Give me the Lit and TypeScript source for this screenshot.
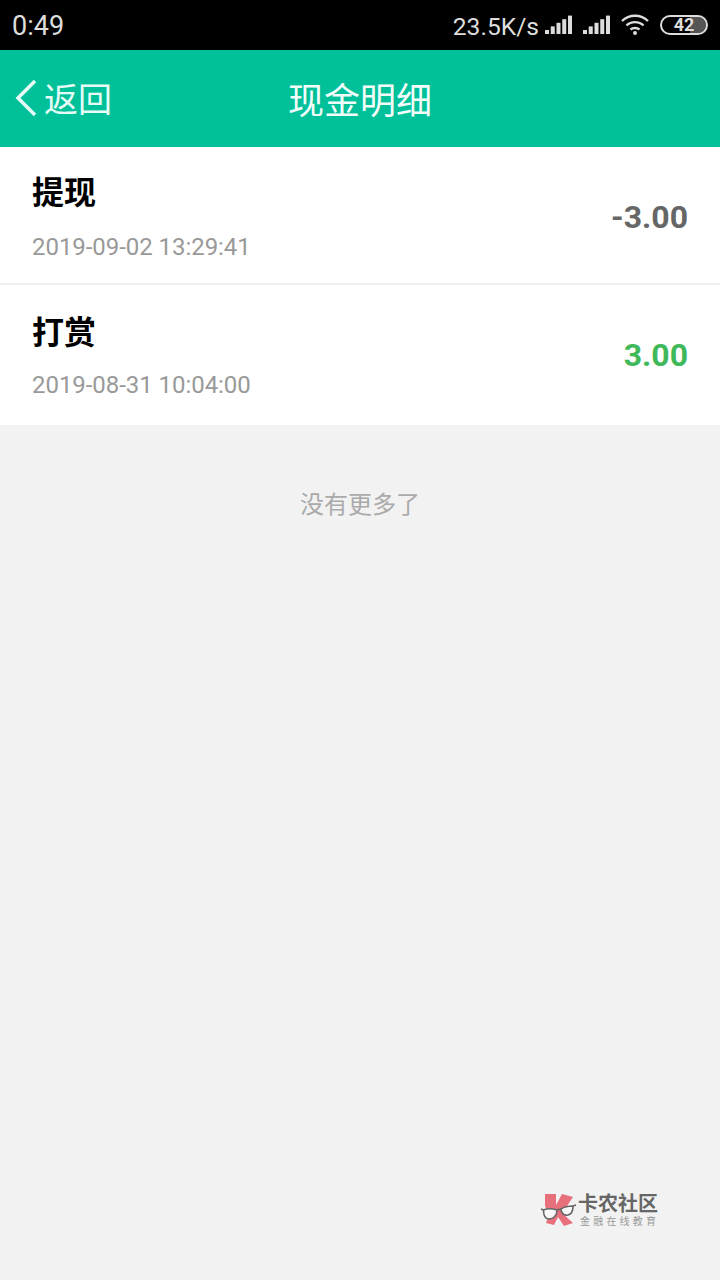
import { LitElement, css, html, svg } from 'lit';
import { customElement } from 'lit/decorators.js';

const SANS = css`Roboto, "Noto Sans CJK SC", sans-serif`;

interface Row {
  title: string;
  time: string;
  amount: string;
  income: boolean;
}

const rows: Row[] = [
  { title: '提现', time: '2019-09-02 13:29:41', amount: '-3.00', income: false },
  { title: '打赏', time: '2019-08-31 10:04:00', amount: '3.00', income: true },
];

const signal = () => html`
  <svg class="signal" width="27" height="20" viewBox="0 0 27 20">
    ${[0, 1, 2, 3, 4].map((i) =>
      svg`<rect x=${i * 5.75} y=${15 - i * 3.6} width="4" height=${4 + i * 3.6} fill="#ddd"></rect>`
    )}
  </svg>
`;

@customElement('app-root')
export class AppRoot extends LitElement {
  static styles = css`
    :host {
      display: flex;
      flex-direction: column;
      width: 720px;
      height: 1280px;
      background: #f2f2f2;
      font-family: ${SANS};
      overflow: hidden;
      position: relative;
    }
    .status {
      height: 50px;
      background: #000;
      color: #ddd;
      display: flex;
      align-items: center;
      padding: 2px 12px 0 12px;
      box-sizing: border-box;
      font-size: 27px;
    }
    .status .speed {
      margin-left: auto;
      margin-right: 6px;
      font-size: 24.6px;
    }
    .signal {
      margin-bottom: 3px;
    }
    .signal + .signal {
      margin-left: 11px;
    }
    .wifi {
      margin-left: 10px;
      margin-bottom: 3px;
    }
    .battery {
      margin-left: 10px;
      margin-bottom: 3px;
      width: 44px;
      height: 16px;
      border: 2px solid #ddd;
      border-radius: 10px;
      font-size: 18px;
      font-weight: 700;
      display: flex;
      align-items: center;
      justify-content: center;
      background: linear-gradient(90deg, transparent 64%, #555 64%);
      background-clip: padding-box;
    }
    .nav {
      height: 97px;
      background: #00c09a;
      color: #fff;
      display: grid;
      grid-template-columns: 1fr auto 1fr;
      align-items: center;
      font-size: 34px;
      padding-bottom: 2px;
      box-sizing: border-box;
    }
    .back {
      display: flex;
      align-items: center;
      gap: 7px;
      padding-left: 15px;
      color: #e6fbf6;
    }
    .title {
      color: #f2fdfa;
      font-size: 36px;
    }
    .list {
      background: #fff;
    }
    .row {
      display: flex;
      align-items: center;
      justify-content: space-between;
      padding: 0 32px;
      box-sizing: border-box;
    }
    .row:first-child {
      height: 138px;
      padding-top: 4px;
      border-bottom: 2px solid #f0f0f0;
    }
    .row:first-child .time {
      margin-top: 19px;
    }
    .row:last-child {
      height: 140px;
      padding-top: 2px;
    }
    .row:last-child .time {
      margin-top: 17px;
    }
    .row:last-child .amount {
      margin-bottom: 3px;
    }
    .name {
      font-size: 32px;
      font-weight: 700;
      color: #000;
      line-height: 40px;
    }
    .time {
      font-size: 24px;
      letter-spacing: -0.05px;
      color: #999;
      line-height: 30px;
    }
    .amount {
      font-size: 32px;
      font-weight: 700;
      color: #666;
    }
    .amount.income {
      color: #3fb85a;
    }
    .end {
      margin-top: 62px;
      text-align: center;
      font-size: 24px;
      color: #aaa;
      line-height: 36px;
    }
    .mark {
      position: absolute;
      left: 540px;
      top: 1192px;
      display: flex;
      align-items: center;
      gap: 1px;
      color: #666;
    }
    .mark-text {
      display: flex;
      flex-direction: column;
    }
    .mark-name {
      font-size: 20px;
      font-weight: 700;
      line-height: 22px;
      color: #666;
    }
    .mark-sub {
      font-size: 10px;
      letter-spacing: 3.2px;
      color: #999;
      line-height: 13px;
      padding-left: 2px;
    }
  `;

  render() {
    return html`
      <div class="status">
        <span>0:49</span>
        <span class="speed">23.5K/s</span>
        ${signal()} ${signal()}
        <svg class="wifi" width="30" height="22" viewBox="0 0 30 22" fill="none" stroke="#ddd" stroke-width="2.4">
          <path d="M2 7 C9 0 21 0 28 7"></path>
          <path d="M6.5 11.5 C11 7 19 7 23.5 11.5"></path>
          <path d="M10.5 15.5 C13 13.5 17 13.5 19.5 15.5"></path>
          <circle cx="15" cy="19" r="2" fill="#ddd" stroke="none"></circle>
        </svg>
        <div class="battery">42</div>
      </div>
      <div class="nav">
        <div class="back">
          <svg width="22" height="38" viewBox="0 0 22 38" fill="none" stroke="#e6fbf6" stroke-width="3.5">
            <path d="M20 2 L3 19 L20 36"></path>
          </svg>
          <span>返回</span>
        </div>
        <div class="title">现金明细</div>
        <div></div>
      </div>
      <div class="list">
        ${rows.map(
          (r) => html`
            <div class="row">
              <div>
                <div class="name">${r.title}</div>
                <div class="time">${r.time}</div>
              </div>
              <div class="amount ${r.income ? 'income' : ''}">${r.amount}</div>
            </div>
          `
        )}
      </div>
      <div class="end">没有更多了</div>
      <div class="mark">
        <svg width="37" height="37" viewBox="0 0 37 37">
          <path d="M5 2 H16 V13 L22 2 L33 5 L25 17 L22 21 L33 31 L24 34 L18 25 L14 33 L6 31 L9 23 L5 14 Z" fill="#e8707c"></path>
          <g fill="#f8f8f8" stroke="#666" stroke-width="1.6">
            <path d="M3.5 18 C8 16 14 17 17 18 C17 24 13 27 9 27 C5 27 3.5 23 3.5 18 Z"></path>
            <path d="M33 14 C29 14 24 15 21 17 C21 21 24 24 28 23 C32 22 33 18 33 14 Z"></path>
            <path d="M1 17 L3.5 18 M17 18 L21 17 M33 14 L36 13" fill="none"></path>
          </g>
        </svg>
        <div class="mark-text">
          <span class="mark-name">卡农社区</span>
          <span class="mark-sub">金融在线教育</span>
        </div>
      </div>
    `;
  }
}
